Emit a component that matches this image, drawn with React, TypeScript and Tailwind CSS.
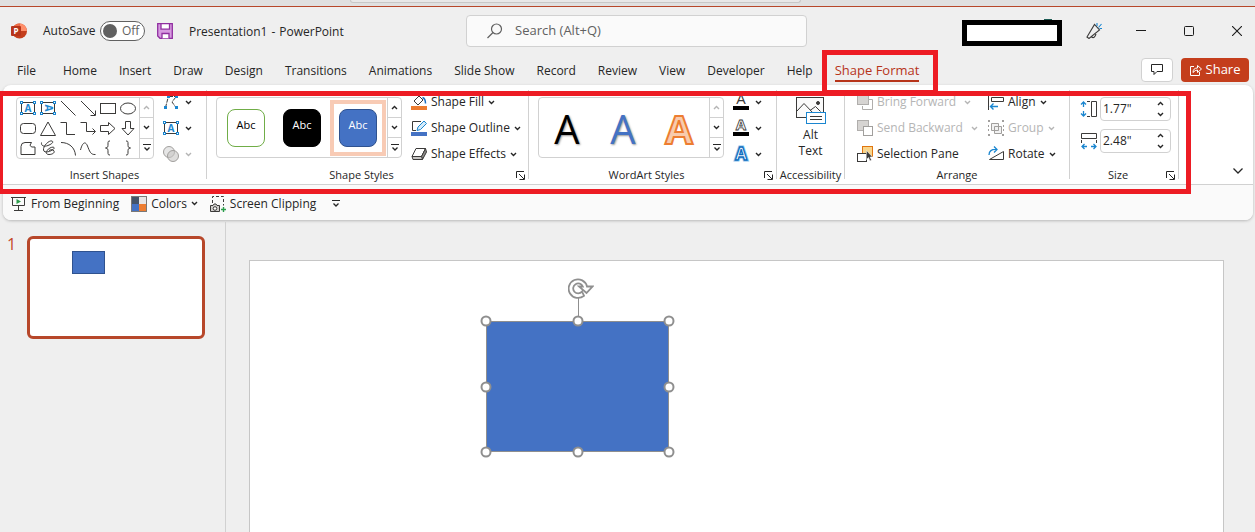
import type { ReactNode } from "react";
import clsx from "clsx";

const tabs = [
  "Home",
  "Insert",
  "Draw",
  "Design",
  "Transitions",
  "Animations",
  "Slide Show",
  "Record",
  "Review",
  "View",
  "Developer",
  "Help",
];

/* ---------- small icons ---------- */

function Svg({ size = 16, children }: { size?: number; children: ReactNode }) {
  return (
    <svg
      width={size}
      height={size}
      viewBox={`0 0 ${size} ${size}`}
      fill="none"
      stroke="#3b3a39"
      className="shrink-0 overflow-visible"
      aria-hidden="true"
    >
      {children}
    </svg>
  );
}

function Chevron({ up, muted }: { up?: boolean; muted?: boolean }) {
  return (
    <svg width="7" height="5" viewBox="0 0 7 5" fill="none" className="shrink-0" aria-hidden="true">
      <path
        d={up ? "M1 4l2.5-2.5L6 4" : "M1 1l2.5 2.5L6 1"}
        stroke={muted ? "#b5b5b5" : "#262626"}
        strokeWidth="1.4"
      />
    </svg>
  );
}

function MoreIcon() {
  return (
    <svg width="8" height="8" viewBox="0 0 8 8" fill="none" stroke="#262626" aria-hidden="true">
      <path d="M0 .5h8" />
      <path d="M1.5 3.5L4 6l2.500-2.500" strokeWidth="1.3" />
    </svg>
  );
}

function Corners({ pts }: { pts: number[][] }) {
  return (
    <>
      {pts.map(([x, y]) => (
        <rect key={`${x}-${y}`} x={x} y={y} width="2" height="2" fill="#fff" stroke="#1a86d0" />
      ))}
    </>
  );
}

const TextBoxShape = ({ vertical }: { vertical?: boolean }) => (
  <>
    <rect x="3.5" y="4.5" width="13" height="11" />
    <Corners pts={[[2.5, 3.5], [15.5, 3.5], [2.5, 14.5], [15.5, 14.5]]} />
    <text
      x="10"
      y="13.5"
      textAnchor="middle"
      fontSize="10"
      fontWeight="700"
      fill="#1a86d0"
      stroke="none"
      transform={vertical ? "rotate(90 10 10)" : undefined}
    >
      A
    </text>
  </>
);

const shapes: { name: string; art: ReactNode }[] = [
  { name: "Text box", art: <TextBoxShape /> },
  { name: "Vertical text box", art: <TextBoxShape vertical /> },
  { name: "Line", art: <path d="M3 3l14.5 14.5" /> },
  { name: "Arrow", art: <path d="M3 3l14 14M17.5 12.5v5h-5" /> },
  { name: "Rectangle", art: <rect x="2.5" y="5.5" width="15" height="10" /> },
  { name: "Oval", art: <ellipse cx="10" cy="10.5" rx="7.5" ry="5.5" /> },
  { name: "Rounded rectangle", art: <rect x="2.5" y="5.5" width="15" height="10" rx="3" /> },
  { name: "Triangle", art: <path d="M10 4l7.5 13.5h-15z" /> },
  { name: "Elbow connector", art: <path d="M2.5 4.5h6v12h8.5" /> },
  { name: "Elbow arrow", art: <path d="M2.5 4.5h6v9h8.5M14.5 10.5l3 3-3 3" /> },
  { name: "Right arrow", art: <path d="M2.5 7.5h8v-3l6.500 6-6.500 6v-3h-8z" /> },
  { name: "Down arrow", art: <path d="M7.5 3.5h5v7h3.500l-6 6.500-6-6.500h3.500z" /> },
  {
    name: "Freeform",
    art: <path d="M3 16.5v-8q0-4 4-4h6.500q-3 3 0 4.500h3.500v7.500z" />,
  },
  {
    name: "Scribble",
    art: <path d="M3.5 4.5C3 8 6 9 10 7.500c4-1.500 6-3.500 4-4.500-3-1-9 5-8.500 9 .5 4 9 1 10.500-1.500 1-2-3-2-6 1-3 2.500-2 5 1 5s6-1.500 5-3.500-3-1.500-5-.5" />,
  },
  { name: "Arc", art: <path d="M3 4.5c8 0 14 5 14.500 13" /> },
  { name: "Curve", art: <path d="M2.5 12c2-8 5-9 7-4s3 9 8 8.500" /> },
  { name: "Left brace", art: <path d="M12 3c-2 0-2 .5-2 3s0 4-2.500 4c2.500 0 2.500 1.500 2.500 4s0 3 2 3" /> },
  { name: "Right brace", art: <path d="M8 3c2 0 2 .5 2 3s0 4 2.500 4c-2.500 0-2.500 1.500-2.500 4s0 3-2 3" /> },
];

const EditShapeIcon = () => (
  <Svg>
    <path d="M2.5 13.5L5 4M6 2.5h7M12.5 3.5L9 8l4 5.500" strokeDasharray="4 1" />
    <path d="M1 12h3v3H1zM12 12h3v3h-3zM12 1h3v3h-3zM4 1h3v3H4z" fill="#1a86d0" stroke="none" />
  </Svg>
);

const TextBoxIcon = () => (
  <Svg>
    <rect x="1.5" y="2.5" width="13" height="11" />
    <Corners pts={[[0.5, 1.5], [13.5, 1.5], [0.5, 12.5], [13.5, 12.5]]} />
    <text x="8" y="11.5" textAnchor="middle" fontSize="10" fontWeight="700" fill="#1a86d0" stroke="none">
      A
    </text>
  </Svg>
);

const MergeIcon = () => (
  <Svg>
    <circle cx="6" cy="6" r="5.5" stroke="#a19f9d" fill="#e6e6e6" />
    <circle cx="10" cy="10" r="5.5" stroke="#a19f9d" fill="#c8c6c4" fillOpacity=".6" />
  </Svg>
);

const FillIcon = () => (
  <Svg>
    <path d="M3 7l5-5 4 4-5 5zM6 1l2 2" />
    <path d="M11.5 3.5q3 1 3 6" stroke="#1a6fc0" strokeWidth="1.5" />
    <path d="M0 12h16v4H0z" fill="#ed7d31" stroke="none" />
  </Svg>
);

const OutlineIcon = () => (
  <Svg>
    <path d="M10 1.5H1.5v9H5" />
    <path d="M6 10.5l1-3.500 6-6 2.500 2.500-6 6z" fill="#d5ebfa" stroke="#1a86d0" />
    <path d="M0 12h16v4H0z" fill="#4472c4" stroke="none" />
  </Svg>
);

const EffectsIcon = () => (
  <Svg>
    <path d="M5 2.5h9.500l-4 8H1z" fill="#fff" />
    <path d="M14.5 2.5l1 3.500-4 7.500-1-3z" fill="#8a8886" />
    <path d="M1 10.5l1 3h9.500l-1-3z" fill="#c8c6c4" />
  </Svg>
);

function LetterIcon({ kind }: { kind: "fill" | "outline" | "effects" }) {
  const effects = kind === "effects";
  return (
    <Svg>
      {effects && (
        <text x="8" y="14" textAnchor="middle" fontSize="17" fontWeight="700" stroke="#8cc5ee" strokeWidth="3" fill="none">
          A
        </text>
      )}
      <text
        x="8"
        y={effects ? 14 : 10}
        textAnchor="middle"
        fontSize={effects ? 17 : 15}
        fontWeight={kind === "fill" ? 400 : 700}
        fill={kind === "fill" ? "#3b3a39" : "#fff"}
        stroke={effects ? "#0f6cbd" : kind === "outline" ? "#3b3a39" : "none"}
        strokeWidth={effects ? 1.3 : 0.8}
      >
        A
      </text>
      {!effects && <path d="M0 12h16v4H0z" fill="#000" stroke="none" />}
    </Svg>
  );
}

const BringForwardIcon = () => (
  <Svg>
    <path d="M5.5 12v3.500h10v-10H12" stroke="#b0aeac" />
    <rect x=".5" y=".5" width="11" height="10" fill="#d6d4d2" stroke="#b0aeac" />
  </Svg>
);

const SendBackwardIcon = () => (
  <Svg>
    <rect x=".5" y=".5" width="11" height="10" fill="#d6d4d2" stroke="#b0aeac" />
    <rect x="6.5" y="6.5" width="9" height="9" fill="#fff" stroke="#a19f9d" />
  </Svg>
);

const SelectionPaneIcon = () => (
  <Svg>
    <rect x="5.5" y=".5" width="10" height="10" fill="#f9d58b" stroke="#e0750f" />
    <rect x=".5" y="7.5" width="9" height="8" fill="#fff" />
    <path d="M9.5 4.5v9l2-2 1.500 3.500 1.500-1-1.500-3h2.500z" fill="#3b3a39" stroke="#fff" strokeWidth=".5" />
  </Svg>
);

const AlignIcon = () => (
  <Svg>
    <path d="M.5 0v16M3.5 3.5h12v4h-12z" />
    <path d="M10 12.5H3M5.5 9.5l-3 3 3 3" stroke="#1a86d0" strokeWidth="1.4" />
  </Svg>
);

const GroupIcon = () => (
  <Svg>
    <path d="M3.5 3.5h7v7h-7zM6.5 6.5h7v7h-7z" stroke="#a19f9d" fill="#e6e6e6" fillOpacity=".5" />
    <path
      d="M0 0h2v2H0zM14 0h2v2h-2zM0 14h2v2H0zM14 14h2v2h-2zM0 5h1v2H0zM0 9h1v2H0zM15 5h1v2h-1zM15 9h1v2h-1z"
      fill="#a19f9d"
      stroke="none"
    />
  </Svg>
);

const RotateIcon = () => (
  <Svg>
    <path d="M1.5 13.5L15.5 5.5v8z" />
    <path d="M1 9q0-6 7.500-5.500M6 .5l3 3-3 3" stroke="#1a86d0" strokeWidth="1.3" />
  </Svg>
);

const HeightIcon = () => (
  <Svg>
    <path d="M10.5.5h5v15h-5zM6 .5h3M6 15.5h3" />
    <path d="M2.5 1v5M2.5 10v5M0 3.5L2.5 1 5 3.5M0 12.5L2.5 15 5 12.5" stroke="#1a86d0" strokeWidth="1.3" />
  </Svg>
);

const WidthIcon = () => (
  <Svg>
    <path d="M.5.5h15v5H.5zM.5 7v3M15.5 7v3" />
    <path d="M1 13.5h5M10 13.5h5M3.5 11L1 13.5 3.5 16M12.5 11l2.500 2.500-2.500 2.500" stroke="#1a86d0" strokeWidth="1.3" />
  </Svg>
);

const PresentIcon = () => (
  <Svg>
    <path d="M0 1.5h15M1.5 1.5v8h12v-8M7.5 9.5v5M3 14.5h9" />
    <path d="M5.5 3L10 5.500 5.500 8z" fill="#2a9d4a" stroke="none" />
  </Svg>
);

const ColorsIcon = () => (
  <Svg>
    <path d="M0 0h8v8H0z" fill="#44546a" stroke="none" />
    <path d="M8 0h8v8H8z" fill="#e7e6e6" stroke="none" />
    <path d="M0 8h8v8H0z" fill="#4472c4" stroke="none" />
    <path d="M8 8h8v8H8z" fill="#ed7d31" stroke="none" />
    <rect x=".5" y=".5" width="15" height="15" stroke="#7a7877" />
  </Svg>
);

const ClippingIcon = () => (
  <Svg>
    <path d="M2.5 7V.5h11v9" strokeDasharray="3 2" />
    <path d="M.5 9.5H3L4 8h2l1 1.500h2.500v6H.5z" fill="#d0cecc" />
    <circle cx="5" cy="12.5" r="1.8" fill="#fff" />
    <path d="M13.5 11v5M11 13.5h5" stroke="#2a9d4a" strokeWidth="1.4" />
  </Svg>
);

const AltTextIcon = () => (
  <svg width="30" height="27" viewBox="0 0 30 27" fill="none" stroke="#3b3a39" aria-hidden="true">
    <rect x=".5" y=".5" width="27" height="20" fill="#fafafa" />
    <path d="M1 14l7-7.500 9 9.500M14 13.5l5.500-4 5 5" />
    <circle cx="22" cy="6" r="1.5" fill="#3b3a39" />
    <rect x="10.5" y="15.5" width="19" height="11" fill="#fff" stroke="#1a86d0" />
    <path d="M14 19.5h12M14 22.5h12" />
  </svg>
);

/* ---------- ribbon pieces ---------- */

function LauncherIcon() {
  return (
    <svg width="9" height="9" viewBox="0 0 9 9" fill="none" stroke="#262626" aria-hidden="true">
      <path d="M.5 7V.5H8M3 3l5 5M8.5 3.5v5h-5" />
    </svg>
  );
}

function RibbonGroup({
  label,
  launcher,
  className,
  inset,
  children,
}: {
  label: string;
  launcher?: boolean;
  className: string;
  inset?: string;
  children: ReactNode;
}) {
  return (
    <section aria-label={label} className="flex shrink-0">
      <div className={clsx("flex flex-col", className)}>
        <div className={clsx("flex h-[78px]", inset)}>{children}</div>
        <div className="flex h-4 items-center">
          <span className="flex-1 text-center text-[11px] whitespace-nowrap">{label}</span>
          {launcher && (
            <button aria-label={`${label} options`} className="w-3">
              <LauncherIcon />
            </button>
          )}
        </div>
      </div>
      <div className="mt-px mb-1 w-px bg-[#d1d1d1]" />
    </section>
  );
}

function Gallery({ topMuted, className, children }: { topMuted?: boolean; className: string; children: ReactNode }) {
  return (
    <div className={clsx("mt-2 flex rounded border border-[#d1d1d1] bg-white", className)}>
      {children}
      <div className="ml-auto flex w-[14px] flex-col divide-y divide-[#d1d1d1] border-l border-[#d1d1d1]">
        <button aria-label="Previous row" className="flex flex-1 items-center justify-center">
          <Chevron up muted={topMuted} />
        </button>
        <button aria-label="Next row" className="flex flex-1 items-center justify-center">
          <Chevron />
        </button>
        <button aria-label="More" className="flex flex-1 items-center justify-center">
          <MoreIcon />
        </button>
      </div>
    </div>
  );
}

function RibbonButton({
  icon,
  label,
  menu = true,
  wide,
  disabled,
}: {
  icon: ReactNode;
  label?: string;
  menu?: boolean;
  wide?: boolean;
  disabled?: boolean;
}) {
  return (
    <button
      disabled={disabled}
      aria-label={label ?? "Text options"}
      className={clsx(
        "flex h-[26px] items-center whitespace-nowrap",
        label ? "gap-1" : "gap-[6px]",
        disabled && "text-[#b5b5b5]",
      )}
    >
      {icon}
      {label && <span>{label}</span>}
      {menu && (
        <span className={clsx(wide && "ml-1")}>
          <Chevron muted={disabled} />
        </span>
      )}
    </button>
  );
}

function SizeField({ id, label, value, icon }: { id: string; label: string; value: string; icon: ReactNode }) {
  return (
    <div className="flex items-center gap-[3px]">
      <label htmlFor={id} aria-label={label}>
        {icon}
      </label>
      <div className="flex h-6 w-[71px] items-center rounded border border-[#d1d1d1] bg-white pr-[6px] pl-[2px]">
        <input id={id} defaultValue={value} className="w-full min-w-0 outline-none" />
        <div className="flex flex-col gap-[6px]">
          <button aria-label={`Increase ${label}`}>
            <Chevron up />
          </button>
          <button aria-label={`Decrease ${label}`}>
            <Chevron />
          </button>
        </div>
      </div>
    </div>
  );
}

const styleTiles = [
  { name: "Outline green", tile: "border-[#70ad47] bg-white text-black", selected: false },
  { name: "Solid black", tile: "border-black bg-black text-white", selected: false },
  { name: "Solid blue", tile: "border-[#2f528f] bg-[#4472c4] text-white", selected: true },
];

const wordArt = [
  { name: "Black", look: "font-medium text-black [text-shadow:1px_1px_2px_#999]" },
  { name: "Blue", look: "font-medium text-[#4472c4] [text-shadow:1px_1px_2px_#999]" },
  { name: "Orange", look: "font-bold text-[#f8cbad] [-webkit-text-stroke:2px_#ed7d31]" },
];

function Ribbon() {
  return (
    <div className="mr-[2px] ml-[3px] rounded-lg bg-white shadow-[0_1px_3px_#b8b8b8]">
      <div className="relative flex border-b border-[#d1d1d1] pt-1 pb-px">
        <RibbonGroup label="Insert Shapes" className="w-[203px]" inset="pl-[13px]">
          <Gallery topMuted className="h-[62px] w-[138px]">
            <div className="grid grid-cols-6 pl-px">
              {shapes.map((shape) => (
                <button key={shape.name} aria-label={shape.name}>
                  <Svg size={20}>{shape.art}</Svg>
                </button>
              ))}
            </div>
          </Gallery>
          <div className="ml-[9px]">
            <RibbonButton icon={<EditShapeIcon />} />
            <RibbonButton icon={<TextBoxIcon />} />
            <RibbonButton icon={<MergeIcon />} disabled />
          </div>
        </RibbonGroup>

        <RibbonGroup label="Shape Styles" launcher className="w-[321px]" inset="pl-[9px]">
          <Gallery className="h-[61px] w-[186px]">
            <div className="flex items-center pl-px">
              {styleTiles.map((s) => (
                <button
                  key={s.name}
                  aria-label={s.name}
                  className={clsx(
                    "flex size-14 items-center justify-center border-4",
                    s.selected ? "border-[#f8cbb5]" : "border-transparent",
                  )}
                >
                  <span
                    className={clsx(
                      "flex size-[38px] items-center justify-center rounded-lg border pb-1 text-[11px]",
                      s.tile,
                    )}
                  >
                    Abc
                  </span>
                </button>
              ))}
            </div>
          </Gallery>
          <div className="ml-[9px]">
            <RibbonButton icon={<FillIcon />} label="Shape Fill" />
            <RibbonButton icon={<OutlineIcon />} label="Shape Outline" />
            <RibbonButton icon={<EffectsIcon />} label="Shape Effects" />
          </div>
        </RibbonGroup>

        <RibbonGroup label="WordArt Styles" launcher className="w-[247px]" inset="pl-[9px]">
          <Gallery topMuted className="h-[61px] w-[186px]">
            <div className="flex items-center">
              {wordArt.map((w) => (
                <button
                  key={w.name}
                  aria-label={`${w.name} WordArt`}
                  className={clsx("flex size-14 items-center justify-center pt-[2px] text-[40px] leading-none", w.look)}
                >
                  A
                </button>
              ))}
            </div>
          </Gallery>
          <div className="ml-[9px]">
            <RibbonButton icon={<LetterIcon kind="fill" />} />
            <RibbonButton icon={<LetterIcon kind="outline" />} />
            <RibbonButton icon={<LetterIcon kind="effects" />} />
          </div>
        </RibbonGroup>

        <RibbonGroup label="Accessibility" className="w-[67px]">
          <button className="flex flex-1 flex-col items-center pt-2 leading-4">
            <AltTextIcon />
            <span className="mt-[3px]">Alt</span>
            <span>Text</span>
          </button>
        </RibbonGroup>

        <RibbonGroup label="Arrange" className="w-[224px]" inset="pl-3">
          <div className="w-[131px]">
            <RibbonButton icon={<BringForwardIcon />} label="Bring Forward" wide disabled />
            <RibbonButton icon={<SendBackwardIcon />} label="Send Backward" wide disabled />
            <RibbonButton icon={<SelectionPaneIcon />} label="Selection Pane" menu={false} />
          </div>
          <div>
            <RibbonButton icon={<AlignIcon />} label="Align" />
            <RibbonButton icon={<GroupIcon />} label="Group" disabled />
            <RibbonButton icon={<RotateIcon />} label="Rotate" />
          </div>
        </RibbonGroup>

        <RibbonGroup label="Size" launcher className="w-[108px]" inset="pl-[11px]">
          <div className="flex flex-col gap-2 pt-2">
            <SizeField id="shape-height" label="Height" value={'1.77"'} icon={<HeightIcon />} />
            <SizeField id="shape-width" label="Width" value={'2.48"'} icon={<WidthIcon />} />
          </div>
        </RibbonGroup>

        <button aria-label="Collapse ribbon" className="mr-[9px] mb-2 ml-auto self-end">
          <svg width="12" height="8" viewBox="0 0 12 8" fill="none" stroke="#262626" strokeWidth="1.3">
            <path d="M1.5 1.5L6 6l4.500-4.500" />
          </svg>
        </button>

        {/* highlight around the format groups */}
        <div className="pointer-events-none absolute top-[6px] right-[62px] -bottom-[10px] -left-[5px] z-10 border-[5px] border-[#ed1c24]" />
      </div>

      <div className="flex h-[35px] items-center rounded-b-lg bg-[#fafafa] pt-[2px] pl-2">
        <button className="flex items-center gap-1">
          <PresentIcon />
          From Beginning
        </button>
        <button className="ml-3 flex items-center gap-1">
          <ColorsIcon />
          Colors
          <Chevron />
        </button>
        <button className="ml-3 flex items-center gap-1">
          <ClippingIcon />
          Screen Clipping
        </button>
        <button aria-label="Customize toolbar" className="ml-4">
          <MoreIcon />
        </button>
      </div>
    </div>
  );
}

/* ---------- window chrome ---------- */

function TitleBar() {
  return (
    <header className="flex h-12 items-center">
      <div className="flex flex-[1_1_18px] items-center pl-[11px]">
        <svg width="16" height="16" viewBox="0 0 16 16" aria-hidden="true">
          <circle cx="8.5" cy="8" r="7.5" fill="#c43e1c" />
          <path d="M8.5.5A7.500 7.500 0 0 1 16 8H8.500z" fill="#ff8f6b" />
          <path d="M8.5.5A7.500 7.500 0 0 0 2 4.500L8.500 8z" fill="#ed6c47" />
          <rect y="3" width="10" height="10" rx="1" fill="#b7341a" />
          <text x="5" y="11" textAnchor="middle" fontSize="8" fontWeight="700" fill="#fff">
            P
          </text>
        </svg>
        <span className="ml-4 w-[57px] whitespace-nowrap">AutoSave</span>
        <button
          role="switch"
          aria-checked="false"
          aria-label="AutoSave"
          className="flex h-5 w-[45px] items-center gap-[5px] rounded-full border border-[#616161] bg-white pl-[2px] text-[#616161]"
        >
          <span className="size-[14px] rounded-full bg-[#616161]" />
          Off
        </button>
        <button aria-label="Save" className="ml-3">
          <svg width="16" height="16" viewBox="0 0 16 16" fill="none" stroke="#902fa0" strokeWidth="1.3" aria-hidden="true">
            <path d="M.7.7h14.600v14.600H3L.7 13z" fill="#d79be0" />
            <path d="M4 .7h8.500v5.500H4zM5 15.3v-4.800h7v4.800" fill="#fff" />
          </svg>
        </button>
        <h1 className="ml-4 flex gap-1 pt-px whitespace-nowrap">
          <span>Presentation1</span>
          <span>-</span>
          <span>PowerPoint</span>
        </h1>
      </div>

      <label className="flex h-8 w-[341px] items-center rounded border border-[#d1d1d1] bg-[#fafafa] pl-5">
        <svg width="16" height="16" viewBox="0 0 16 16" fill="none" stroke="#616161" strokeWidth="1.2" aria-hidden="true">
          <circle cx="9.5" cy="6" r="5" />
          <path d="M6 9.5L.5 15" />
        </svg>
        <input
          type="search"
          aria-label="Search"
          placeholder="Search (Alt+Q)"
          className="ml-3 min-w-0 flex-1 text-[13px] outline-none placeholder:text-[#616161]"
        />
      </label>

      <div className="flex flex-1 items-center justify-end">
        <div className="relative mt-1 mr-6 h-[26px] w-[100px] border-[5px] border-black bg-white">
          <span className="absolute -top-[6px] right-[5px] h-px w-2 bg-[#1c5b54]" />
        </div>
        <button aria-label="Coming soon" className="mr-[21px]">
          <svg width="16" height="16" viewBox="0 0 16 16" fill="none" stroke="#3b3a39" strokeWidth="1.1">
            <path d="M1 14L8.5 1.5l5 5.500L3 15.500zM5.5 14q3 2 4.500-3" />
            <path d="M11 3V0M12.5 4.5L15.5 1M13.5 5.5H16" stroke="#1a86d0" />
          </svg>
        </button>
        <div className="flex gap-3">
          <button aria-label="Minimize" className="flex h-8 w-9 items-center justify-center">
            <svg width="10" height="10" viewBox="0 0 10 10" stroke="#1b1b1b">
              <path d="M0 4.5h10" />
            </svg>
          </button>
          <button aria-label="Maximize" className="flex h-8 w-9 items-center justify-center">
            <svg width="10" height="10" viewBox="0 0 10 10" fill="none" stroke="#1b1b1b">
              <rect x=".5" y=".5" width="9" height="9" rx="1" />
            </svg>
          </button>
          <button aria-label="Close" className="flex h-8 w-9 items-center justify-center">
            <svg width="10" height="10" viewBox="0 0 10 10" stroke="#1b1b1b" strokeWidth="1.1">
              <path d="M0 0l10 10M10 0L0 10" />
            </svg>
          </button>
        </div>
      </div>
    </header>
  );
}

function TabRow() {
  return (
    <nav className="flex h-[30px] items-center pr-[6px] pl-[17px] whitespace-nowrap">
      <button className="mr-[27px] pt-[2px]">File</button>
      <div className="flex items-center gap-[22px]">
        {tabs.map((tab) => (
          <button key={tab} className="pt-[2px]">
            {tab}
          </button>
        ))}
        <button className="relative h-6 border-y-2 border-t-transparent border-b-[#b7341a] pt-px text-[13px] font-medium text-[#b7341a]">
          Shape Format
          {/* highlight around the active tab */}
          <span className="pointer-events-none absolute -top-[10px] -right-[19px] -bottom-[15px] -left-[13px] z-10 border-[5px] border-[#ed1c24]" />
        </button>
      </div>
      <button
        aria-label="Comments"
        className="ml-auto flex h-6 w-8 items-center justify-center rounded border border-[#d1d1d1] bg-white"
      >
        <svg width="12" height="12" viewBox="0 0 12 12" fill="none" stroke="#262626">
          <path d="M.5.5h11v7H6l-3 3v-3H.5z" />
        </svg>
      </button>
      <button className="ml-2 flex h-6 w-[68px] items-center justify-center gap-1 rounded bg-[#c43e1c] text-[13px] font-medium text-white">
        <svg width="12" height="12" viewBox="0 0 12 12" fill="none" stroke="#fff">
          <path d="M4 2.5H.5v9h9V8M3 8.5Q3 4 7.500 4V1.500l4 3.500-4 3.500V6Q5 6 3 8.500z" />
        </svg>
        Share
      </button>
    </nav>
  );
}

/* ---------- slide area ---------- */

const handles = [
  "left-0 top-0",
  "left-1/2 top-0",
  "left-full top-0",
  "left-0 top-1/2",
  "left-full top-1/2",
  "left-0 top-full",
  "left-1/2 top-full",
  "left-full top-full",
];

function SelectedShape() {
  return (
    <div className="absolute top-[60px] left-[236px] h-[131px] w-[183px] bg-[#4472c4] ring-1 ring-[#8f8f8f] ring-inset">
      <div className="absolute -top-6 left-1/2 h-6 w-px bg-[#8f8f8f]" />
      <svg
        width="26"
        height="22"
        viewBox="0 0 26 22"
        fill="none"
        stroke="#8f8f8f"
        strokeWidth="1.8"
        className="absolute -top-11 left-1/2 -ml-[10px]"
      >
        <path
          d="M16 18.7A9.300 9.300 0 1 1 19 9.500H24.500L18.500 16 11 9.500H14.800A5 5 0 1 0 14 14.700z"
          fill="#fff"
        />
      </svg>
      {handles.map((pos) => (
        <span
          key={pos}
          className={clsx(
            "absolute size-[11px] -translate-x-1/2 -translate-y-1/2 rounded-full border-2 border-[#8f8f8f] bg-white",
            pos,
          )}
        />
      ))}
    </div>
  );
}

export default function App() {
  return (
    <div
      className="flex h-screen flex-col overflow-hidden bg-[#efefef] text-[12px] text-[#262626]"
      style={{ fontFamily: '"Open Sans", "Noto Sans", sans-serif' }}
    >
      <div className="flex h-[7px] justify-center border-b border-[#b7472a] bg-[#e0e0e0] pr-[105px]">
        <div className="h-[3px] w-[451px] rounded-b-sm border border-t-0 border-[#c8c8c8] bg-[#e8e8e8]" />
      </div>
      <TitleBar />
      <TabRow />
      <Ribbon />

      <main className="flex min-h-0 flex-1">
        <aside className="mt-[2px] w-[226px] shrink-0 border-r border-[#d1d1d1]">
          <div className="flex gap-[10px] pt-[14px] pl-[7px]">
            <span className="w-[10px] text-[16px] leading-4 text-[#c4472a]">1</span>
            <button
              aria-label="Slide 1"
              className="relative h-[103px] w-[178px] rounded-md border-3 border-[#b7472a] bg-white"
            >
              <span className="absolute top-3 left-[42px] h-[23px] w-[33px] border border-[#2f528f] bg-[#4472c4]" />
            </button>
          </div>
        </aside>
        <div className="flex flex-1 pt-10 pr-[31px] pl-[23px]">
          <div className="relative flex-1 border border-b-0 border-[#c6c6c6] bg-white">
            <SelectedShape />
          </div>
        </div>
      </main>
    </div>
  );
}
